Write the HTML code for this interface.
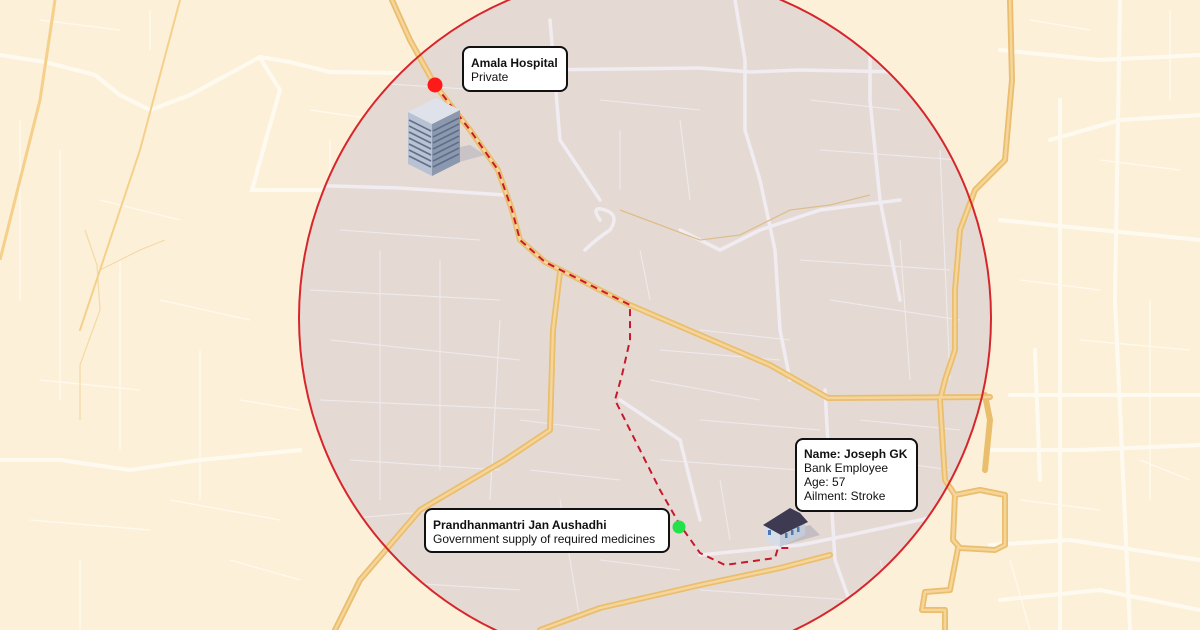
<!DOCTYPE html>
<html><head><meta charset="utf-8"><style>
html,body{margin:0;padding:0;width:1200px;height:630px;overflow:hidden;background:#fdf0d9;font-family:"Liberation Sans",sans-serif}
.lbl{position:absolute;background:#fff;border:2px solid #111;border-radius:8px;font-size:12px;line-height:14px;color:#111;padding:6px 4px 4px 7px;box-sizing:border-box;white-space:nowrap;overflow:hidden}
.lbl b{font-weight:bold}
</style></head><body>
<svg width="1200" height="630" style="position:absolute;left:0;top:0;display:block">
<defs><clipPath id="cc"><circle cx="645" cy="318" r="346"/></clipPath></defs>
<rect width="1200" height="630" fill="#fdf0d9"/>
<g fill="none" stroke="#fffaf0" stroke-width="4" stroke-linecap="round">
<path d="M0 55 L45 62 L95 75 L120 95 L150 110 L190 95 L260 57 L290 62 L330 72 L400 73"/>
<path d="M260 58 L280 90 L270 125 L252 190 L330 190 L400 190"/>
<path d="M0 460 L60 460 L130 470 L200 460 L300 450"/>
<path d="M1000 50 L1100 60 L1200 55"/>
<path d="M1050 140 L1120 120 L1200 115"/>
<path d="M1000 220 L1100 230 L1200 240"/>
<path d="M990 450 L1080 450 L1200 445"/>
<path d="M1060 100 L1060 630"/>
<path d="M1120 0 L1115 300 L1130 630"/>
<path d="M990 545 L1070 540 L1200 560"/>
<path d="M1000 600 L1100 590 L1200 610"/>
<path d="M1035 350 L1040 480"/>
<path d="M1010 395 L1200 395"/>
</g>
<g fill="none" stroke="#fffaf0" stroke-width="1.3" opacity="0.9">
<path d="M20 120 L20 300 M60 150 L60 400 M100 200 L180 220 M120 260 L120 450 M160 300 L250 320 M200 350 L200 500 M30 520 L150 530 M80 560 L80 630 M170 500 L280 520 M230 560 L300 580 M40 380 L140 390 M240 400 L300 410 M150 10 L150 50 M40 20 L120 30 M310 110 L380 120 M330 140 L330 260"/>
<path d="M1100 160 L1180 170 M1150 300 L1150 500 M1020 280 L1100 290 M1080 340 L1190 350 M1020 500 L1100 510 M1140 460 L1190 480 M1010 560 L1030 630 M1170 10 L1170 100 M1030 20 L1090 30"/>
</g>
<g fill="none" stroke="#f3d9a5" stroke-width="1.2">
<path d="M85 230 L97 265 L100 310 L80 365 L80 420 M100 270 L140 250 L165 240"/>
<path d="M55 0 L40 100 L15 200 L0 260" stroke-width="3" stroke="#f5d08a"/>
</g>
<circle cx="645" cy="318" r="346" fill="#e5dad3"/>
<g clip-path="url(#cc)">
<g fill="none" stroke="#f0ecf1" stroke-width="3.5" stroke-linecap="round">
<path d="M300 185 L400 188 L505 195"/>
<path d="M540 70 L700 68 L750 72 L800 70 L900 72 L990 70"/>
<path d="M735 0 L745 60 L745 130 L760 180 L775 250 L780 330 L790 380"/>
<path d="M825 390 L830 480 L835 560 L860 630"/>
<path d="M700 555 L800 545 L850 535 L920 520 L992 500"/>
<path d="M680 230 L720 250 L760 230 L820 210 L900 200"/>
<path d="M620 400 L680 440 L700 520"/>
<path d="M870 0 L870 100 L880 200 L900 300"/>
<path d="M550 20 L560 140 L600 200"/>
<path d="M600 220 Q590 205 605 210 Q620 215 610 230 Q595 240 585 250"/>
</g>
<g fill="none" stroke="#f0ecf1" stroke-width="1.1" opacity="0.85">
<path d="M330 80 L480 90 M340 230 L480 240 M310 290 L500 300 M330 340 L520 360 M320 400 L540 410 M350 460 L500 470 M330 520 L450 510 M360 580 L520 590 M380 250 L380 500 M440 260 L440 470 M500 320 L490 500"/>
<path d="M600 100 L700 110 M620 130 L620 190 M680 120 L690 200 M810 100 L900 110 M820 150 L960 160 M800 260 L950 270 M830 300 L960 320 M700 330 L790 340 M660 350 L780 360 M650 380 L760 400 M700 420 L820 430 M660 460 L800 470 M720 480 L730 540 M860 420 L960 430 M880 460 L950 470 M900 240 L910 380 M940 150 L950 380 M640 250 L650 300"/>
<path d="M520 420 L600 430 M530 470 L620 480 M560 500 L580 620 M600 560 L680 570 M700 590 L850 600 M880 560 L900 630"/>
</g>
<g fill="none" stroke="#ddbe8d" stroke-width="1.3">
<path d="M620 210 L700 240 L740 235 L790 210 L830 205 L870 195"/>
</g>
</g>
<g fill="none" stroke-linecap="round" stroke-linejoin="round">
<g stroke="#e9be6d" stroke-width="6">
<path d="M392 0 L410 40 L435 85 L470 130 L498 170 L512 210 L520 240 L545 262 L600 290 L630 305 L700 335 L770 365 L800 382 L828 398 L990 397"/>
<path d="M560 272 L553 330 L550 430 L505 460 L420 510 L360 580 L335 630"/>
<path d="M540 630 L600 608 L700 585 L780 568 L830 555"/>
<path d="M1010 0 L1012 80 L1005 160 L975 190 L960 230 L955 290 L955 350 L945 380 L940 400 L945 480 L955 495"/>
<path d="M985 395 L990 420 L985 470"/>
<path d="M955 495 L980 490 L1005 495 L1005 545 L995 550 L960 548 L953 540 Z"/>
<path d="M958 548 L950 590 L925 592 L922 610 L945 610 L945 630"/>
</g>
<g stroke="#f6d49a" stroke-width="2.5">
<path d="M392 0 L410 40 L435 85 L470 130 L498 170 L512 210 L520 240 L545 262 L600 290 L630 305 L700 335 L770 365 L800 382 L828 398 L990 397"/>
<path d="M560 272 L553 330 L550 430 L505 460 L420 510 L360 580 L335 630"/>
<path d="M540 630 L600 608 L700 585 L780 568 L830 555"/>
<path d="M1010 0 L1012 80 L1005 160 L975 190 L960 230 L955 290 L955 350 L945 380 L940 400 L945 480 L955 495"/>
<path d="M955 495 L980 490 L1005 495 L1005 545 L995 550 L960 548 L953 540 Z"/>
<path d="M958 548 L950 590 L925 592 L922 610 L945 610 L945 630"/>
</g>
<path d="M180 0 L140 150 L80 330" stroke="#f5d08a" stroke-width="2"/>
</g>
<circle cx="645" cy="318" r="346" fill="none" stroke="#d7262b" stroke-width="2"/>
<path d="M435 85 L470 130 L498 170 L512 210 L520 240 L545 262 L600 290 L630 305 L630 340 L622 375 L615 400 L640 450 L660 490 L680 525 L700 553 L725 565 L775 558 L778 548 L790 548" fill="none" stroke="#c8182d" stroke-width="2" stroke-dasharray="7,5"/>
<circle cx="435" cy="85" r="7.5" fill="#ff1a1a"/>
<circle cx="679" cy="527" r="6.5" fill="#22e14a"/>
<g>
<polygon points="430,170 485,155 470,145 420,155" fill="#9aa0b5" opacity="0.4"/>
<polygon points="408,112 432,124 432,176 408,164" fill="#b9c2d3"/>
<polygon points="432,124 460,110 460,162 432,176" fill="#8c98ae"/>
<polygon points="408,112 436,98 460,110 432,124" fill="#dfe2ea"/>
<g stroke="#5f6f8a" stroke-width="1.6">
<path d="M409 120 L431 131 M409 126 L431 137 M409 132 L431 143 M409 138 L431 149 M409 144 L431 155 M409 150 L431 161 M409 156 L431 167"/>
<path d="M433 131 L459 118 M433 137 L459 124 M433 143 L459 130 M433 149 L459 136 M433 155 L459 142 M433 161 L459 148 M433 167 L459 154"/>
</g>
</g>
<g>
<polygon points="785,545 820,535 810,525 790,530" fill="#a49fb0" opacity="0.5"/>
<polygon points="765,525 780,533 780,547 765,540" fill="#d7dde8"/>
<polygon points="780,533 805,522 805,535 780,547" fill="#c5ccd9"/>
<polygon points="763,525 790,508 800,513 808,522 781,535" fill="#3e3a52"/>
<rect x="768" y="530" width="3" height="5" fill="#4a7ab0"/>
<rect x="785" y="533" width="2.5" height="5" fill="#4a7ab0"/>
<rect x="791" y="530" width="2.5" height="5" fill="#4a7ab0"/>
<rect x="797" y="527" width="2.5" height="5" fill="#4a7ab0"/>
</g>
</svg>
<div class="lbl" style="left:462px;top:46px;width:106px;height:46px;padding-top:8px"><b>Amala Hospital</b><br>Private</div>
<div class="lbl" style="left:424px;top:508px;width:246px;height:45px;padding-top:8px"><b>Prandhanmantri Jan Aushadhi</b><br>Government supply of required medicines</div>
<div class="lbl" style="left:795px;top:438px;width:123px;height:74px;padding-top:7px"><b>Name: Joseph GK</b><br>Bank Employee<br>Age: 57<br>Ailment: Stroke</div>
</body></html>
